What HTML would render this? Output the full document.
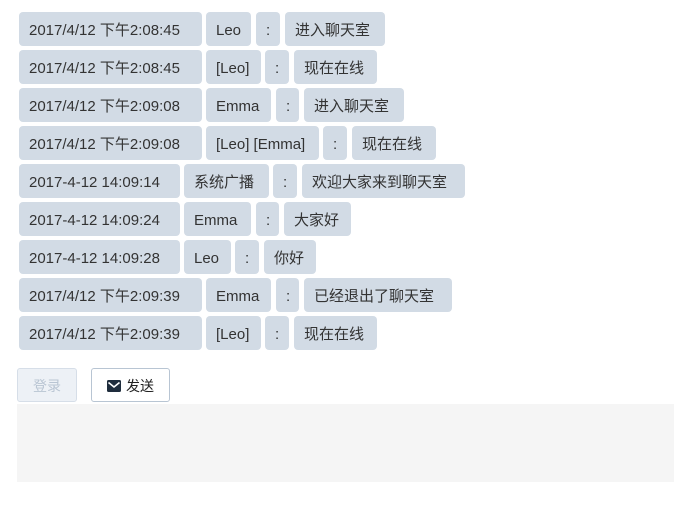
<!DOCTYPE html>
<html><head><meta charset="utf-8"><style>
body{margin:0;width:674px;height:523px;background:#fff;position:relative;font-family:"Liberation Sans","Noto Sans CJK SC",sans-serif;font-size:15px;color:#333;overflow:hidden}
.t{position:absolute;height:34px;background:#d2dbe5;border-radius:4px;display:flex;align-items:center;justify-content:flex-start;white-space:nowrap;line-height:1;padding:3px 0 0 10px;box-sizing:border-box}
.b{position:absolute;top:368px;height:34px;border-radius:3px;font-size:14px;display:flex;align-items:center;justify-content:center;line-height:1;box-sizing:border-box;padding-top:1px}
</style></head><body>
<div id="c"></div>
<div class="b" style="left:17px;width:60px;background:#edf1f6;border:1px solid #d6dee8;color:#b9c5d3">登录</div>
<div class="b" style="left:91px;width:79px;background:#fff;border:1px solid #b8c5d3;color:#222"><svg width="14" height="12" viewBox="0 0 14 12" style="margin-right:5px"><rect x="0" y="0" width="14" height="12" rx="1.5" fill="#1f2d3d"/><path d="M1.5 2.5 L7 7 L12.5 2.5" stroke="#fff" stroke-width="1.6" fill="none"/></svg>发送</div>
<div style="position:absolute;left:17px;top:404px;width:657px;height:78px;background:#f5f5f5"></div>
<script>
var rows=[
[12,[[19,202,"2017/4/12 下午2:08:45"],[206,251,"Leo"],[256,280,":"],[285,385,"进入聊天室"]]],
[50,[[19,202,"2017/4/12 下午2:08:45"],[206,261,"[Leo]"],[265,289,":"],[294,377,"现在在线"]]],
[88,[[19,202,"2017/4/12 下午2:09:08"],[206,271,"Emma"],[276,299,":"],[304,404,"进入聊天室"]]],
[126,[[19,202,"2017/4/12 下午2:09:08"],[206,319,"[Leo] [Emma]"],[323,347,":"],[352,436,"现在在线"]]],
[164,[[19,180,"2017-4-12 14:09:14"],[184,269,"系统广播"],[273,297,":"],[302,465,"欢迎大家来到聊天室"]]],
[202,[[19,180,"2017-4-12 14:09:24"],[184,251,"Emma"],[256,279,":"],[284,351,"大家好"]]],
[240,[[19,180,"2017-4-12 14:09:28"],[184,231,"Leo"],[235,259,":"],[264,316,"你好"]]],
[278,[[19,202,"2017/4/12 下午2:09:39"],[206,271,"Emma"],[276,299,":"],[304,452,"已经退出了聊天室"]]],
[316,[[19,202,"2017/4/12 下午2:09:39"],[206,261,"[Leo]"],[265,289,":"],[294,377,"现在在线"]]]
];
var h="";rows.forEach(function(r){r[1].forEach(function(t){h+='<div class="t" style="top:'+r[0]+'px;left:'+t[0]+'px;width:'+(t[1]-t[0])+'px">'+t[2]+'</div>';});});
document.getElementById("c").innerHTML=h;
</script>
</body></html>
